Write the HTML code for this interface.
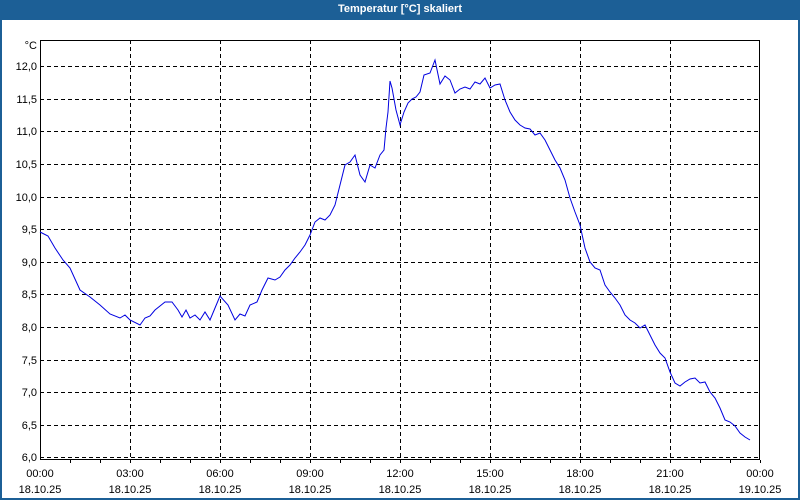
<!DOCTYPE html>
<html><head><style>
html,body{margin:0;padding:0;width:800px;height:500px;overflow:hidden;background:#1c5f96;}
#w{position:absolute;left:2px;top:20px;width:796px;height:478px;background:#fff;}
#t{position:absolute;left:0;top:0;width:800px;height:20px;color:#fff;font:bold 11px "Liberation Sans",sans-serif;text-align:center;line-height:19px;}
svg text{font-family:"Liberation Sans",sans-serif;font-size:11px;}
</style></head><body>
<div id="t">Temperatur [°C] skaliert</div>
<div id="w"></div>
<svg width="800" height="500" style="position:absolute;left:0;top:0">
<g stroke="#000" stroke-dasharray="4,3" stroke-width="1">
<line x1="40" x2="760" y1="66.5" y2="66.5"/><line x1="40" x2="760" y1="99.5" y2="99.5"/><line x1="40" x2="760" y1="131.5" y2="131.5"/><line x1="40" x2="760" y1="164.5" y2="164.5"/><line x1="40" x2="760" y1="197.5" y2="197.5"/><line x1="40" x2="760" y1="229.5" y2="229.5"/><line x1="40" x2="760" y1="262.5" y2="262.5"/><line x1="40" x2="760" y1="294.5" y2="294.5"/><line x1="40" x2="760" y1="327.5" y2="327.5"/><line x1="40" x2="760" y1="360.5" y2="360.5"/><line x1="40" x2="760" y1="392.5" y2="392.5"/><line x1="40" x2="760" y1="425.5" y2="425.5"/><line x1="40" x2="760" y1="457.5" y2="457.5"/>
<line y1="40" y2="460" x1="130.5" x2="130.5"/><line y1="40" y2="460" x1="220.5" x2="220.5"/><line y1="40" y2="460" x1="310.5" x2="310.5"/><line y1="40" y2="460" x1="400.5" x2="400.5"/><line y1="40" y2="460" x1="490.5" x2="490.5"/><line y1="40" y2="460" x1="580.5" x2="580.5"/><line y1="40" y2="460" x1="670.5" x2="670.5"/>
</g>
<g stroke="#000" stroke-width="1">
<rect x="40.5" y="40.5" width="719" height="419" fill="none"/>
<path d="M70.5 460v3M100.5 460v3M130.5 460v3M160.5 460v3M190.5 460v3M220.5 460v3M250.5 460v3M280.5 460v3M310.5 460v3M340.5 460v3M370.5 460v3M400.5 460v3M430.5 460v3M460.5 460v3M490.5 460v3M520.5 460v3M550.5 460v3M580.5 460v3M610.5 460v3M640.5 460v3M670.5 460v3M700.5 460v3M730.5 460v3M760.5 460v3"/>
</g>
<polyline fill="none" stroke="#0000e0" stroke-width="1" points="40,232 48,236 55,248 63,260 70,268 80,290 90,297 100,305 110,314 120,318 125,315 130,320 140,325 145,318 150,316 155,310 165,302 172,302 178,310 182,317 186,310 190,318 195,315 200,320 205,312 210,320 215,308 220,296 228,305 235,320 240,314 245,316 250,305 257,302 262,290 268,278 275,280 280,277 285,270 290,265 295,258 300,252 305,245 310,235 315,222 320,218 325,220 330,215 335,205 340,185 345,165 350,162 355,155 360,175 365,182 370,165 375,168 380,155 384,150 386,128 388,112 390,81 392,88 396,110 400,125 404,112 408,103 412,99 416,97 420,92 424,75 430,73 435,60 440,84 445,76 450,80 455,93 460,89 465,87 470,89 475,82 480,84 485,78 490,88 495,85 500,84 505,100 510,112 515,120 520,125 525,128 530,129 535,135 540,133 545,140 550,150 555,160 560,168 565,180 570,198 575,212 580,225 585,248 590,262 595,268 600,270 605,285 610,292 615,298 620,305 625,315 630,320 635,323 640,328 645,325 650,335 655,345 660,353 665,358 670,372 675,383 680,386 685,382 690,379 695,378 700,383 705,382 710,392 715,398 720,408 725,420 730,422 735,426 740,433 745,437 750,440"/>
<g text-anchor="end">
<text x="37" y="49">°C</text>
<text x="37" y="70">12,0</text><text x="37" y="103">11,5</text><text x="37" y="135">11,0</text><text x="37" y="168">10,5</text><text x="37" y="201">10,0</text><text x="37" y="233">9,5</text><text x="37" y="266">9,0</text><text x="37" y="298">8,5</text><text x="37" y="331">8,0</text><text x="37" y="364">7,5</text><text x="37" y="396">7,0</text><text x="37" y="429">6,5</text><text x="37" y="461">6,0</text>
</g>
<g text-anchor="middle">
<text x="40" y="477">00:00</text><text x="130" y="477">03:00</text><text x="220" y="477">06:00</text><text x="310" y="477">09:00</text><text x="400" y="477">12:00</text><text x="490" y="477">15:00</text><text x="580" y="477">18:00</text><text x="670" y="477">21:00</text><text x="760" y="477">00:00</text>
<text x="40" y="493">18.10.25</text><text x="130" y="493">18.10.25</text><text x="220" y="493">18.10.25</text><text x="310" y="493">18.10.25</text><text x="400" y="493">18.10.25</text><text x="490" y="493">18.10.25</text><text x="580" y="493">18.10.25</text><text x="670" y="493">18.10.25</text><text x="760" y="493">19.10.25</text>
</g>
</svg>
</body></html>
